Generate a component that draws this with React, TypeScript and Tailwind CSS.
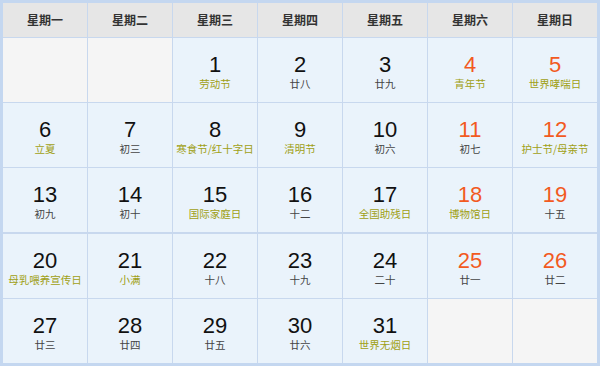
import React from "react";

type Day = { d: number; sub: string; fest?: boolean; red?: boolean } | null;

const weekdays = ["星期一", "星期二", "星期三", "星期四", "星期五", "星期六", "星期日"];

const days: Day[] = [
  null,
  null,
  { d: 1, sub: "劳动节", fest: true },
  { d: 2, sub: "廿八" },
  { d: 3, sub: "廿九" },
  { d: 4, sub: "青年节", fest: true, red: true },
  { d: 5, sub: "世界哮喘日", fest: true, red: true },
  { d: 6, sub: "立夏", fest: true },
  { d: 7, sub: "初三" },
  { d: 8, sub: "寒食节/红十字日", fest: true },
  { d: 9, sub: "清明节", fest: true },
  { d: 10, sub: "初六" },
  { d: 11, sub: "初七", red: true },
  { d: 12, sub: "护士节/母亲节", fest: true, red: true },
  { d: 13, sub: "初九" },
  { d: 14, sub: "初十" },
  { d: 15, sub: "国际家庭日", fest: true },
  { d: 16, sub: "十二" },
  { d: 17, sub: "全国助残日", fest: true },
  { d: 18, sub: "博物馆日", fest: true, red: true },
  { d: 19, sub: "十五", red: true },
  { d: 20, sub: "母乳喂养宣传日", fest: true },
  { d: 21, sub: "小满", fest: true },
  { d: 22, sub: "十八" },
  { d: 23, sub: "十九" },
  { d: 24, sub: "二十" },
  { d: 25, sub: "廿一", red: true },
  { d: 26, sub: "廿二", red: true },
  { d: 27, sub: "廿三" },
  { d: 28, sub: "廿四" },
  { d: 29, sub: "廿五" },
  { d: 30, sub: "廿六" },
  { d: 31, sub: "世界无烟日", fest: true },
  null,
  null,
];

const App = () => {
  return (
    <div className="w-[600px] h-[366px] bg-[#c4d7f0] p-[3px] font-['Noto_Sans_CJK_SC',sans-serif]">
      <div className="grid grid-cols-7 gap-px bg-[#c8d8ee] w-[594px] h-[360px]">
        {weekdays.map((w) => (
          <div
            key={w}
            className="h-[34px] bg-[#e6e6e6] flex items-center justify-center text-[12px] font-bold text-[#333]"
          >
            {w}
          </div>
        ))}
        {days.map((day, i) =>
          day ? (
            <div key={i} className="h-[64px] bg-[#eaf3fb] flex flex-col items-center pt-[16px]">
              <div
                className={`font-['Liberation_Sans',sans-serif] text-[22px] leading-[22px] ${
                  day.red ? "text-[#f25a1f]" : "text-[#111]"
                }`}
              >
                {day.d}
              </div>
              <div
                className={`text-[10.5px] leading-[14px] mt-px whitespace-nowrap ${
                  day.fest ? "text-[#a0a014]" : "text-[#444]"
                }`}
              >
                {day.sub}
              </div>
            </div>
          ) : (
            <div key={i} className="h-[64px] bg-[#f5f5f5]" />
          )
        )}
      </div>
    </div>
  );
};

export default App;
